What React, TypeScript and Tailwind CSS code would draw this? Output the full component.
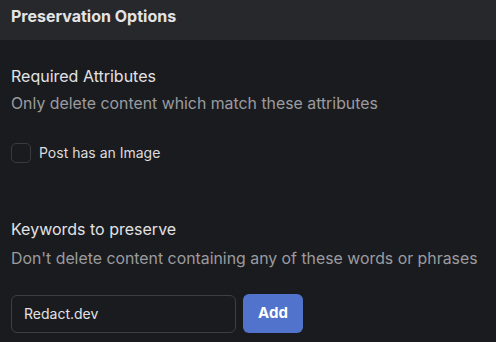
export default function App() {
  return (
    <div className="w-[496px] h-[342px] bg-[#1a1b1f] overflow-hidden" style={{ fontFamily: "Inter, 'Noto Sans', sans-serif" }}>
      <div className="h-[40px] bg-[#27282c] flex items-center px-[11px]">
        <span className="text-[16px] font-bold text-[#e4e4e6] mt-[-8px]">Preservation Options</span>
      </div>
      <div className="px-[11px]">
        <div className="mt-[26px] text-[16px] leading-[20px] text-[#e2e2e4]">Required Attributes</div>
        <div className="mt-[8px] text-[15.85px] leading-[20px] text-[#9b9b9f]">Only delete content which match these attributes</div>
        <label className="mt-[28px] flex items-center gap-[8px]">
          <span className="w-[20px] h-[20px] rounded-[5px] border border-[#3a3b40] bg-[#1a1b1f]" />
          <span className="text-[14px] text-[#dcdcde]">Post has an Image</span>
        </label>
        <div className="mt-[56px] text-[16px] leading-[20px] text-[#e2e2e4]">Keywords to preserve</div>
        <div className="mt-[10px] text-[15.85px] leading-[20px] text-[#9b9b9f]">Don't delete content containing any of these words or phrases</div>
        <div className="mt-[25px] flex items-center gap-[7px]">
          <div className="w-[225px] h-[38px] rounded-[6px] border border-[#3e3f44] flex items-center px-[12px] text-[14px] text-[#e2e2e4]">Redact.dev</div>
          <button className="w-[60px] h-[39px] rounded-[6px] bg-[#5173cc] text-white text-[15px] font-bold">Add</button>
        </div>
      </div>
    </div>
  );
}
